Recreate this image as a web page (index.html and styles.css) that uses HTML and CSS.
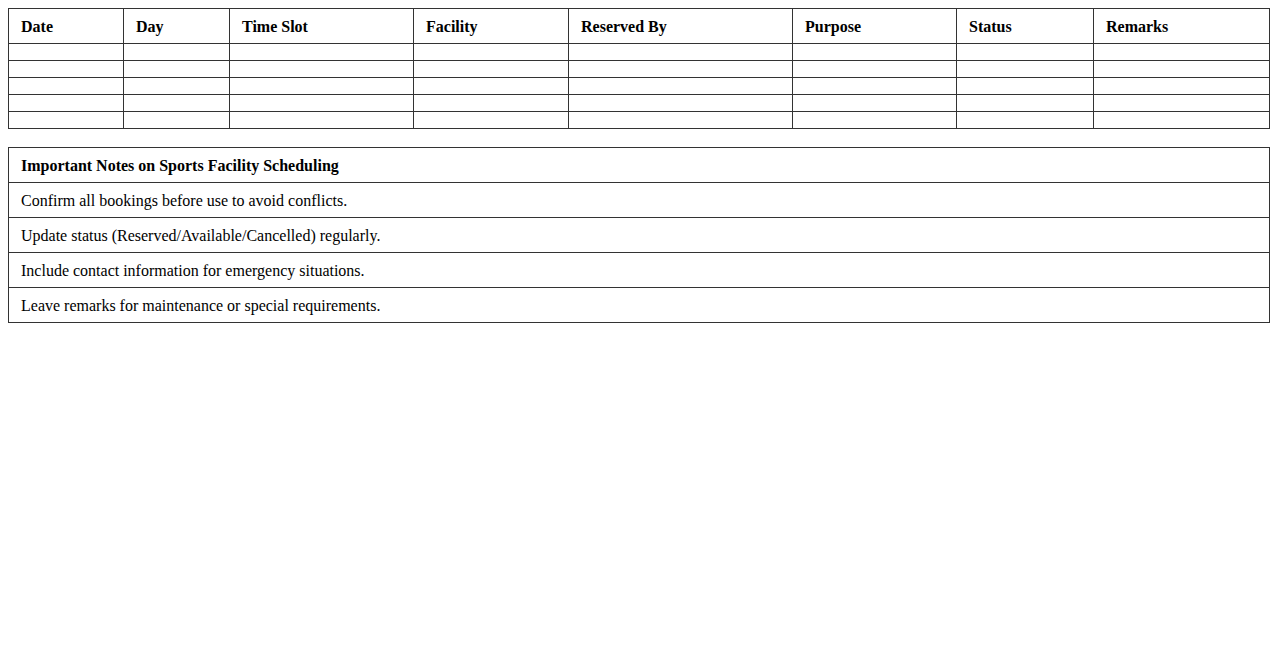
FILE: index.html
```html
<!DOCTYPE html>
<html>
<head>
<meta charset="utf-8">
<title>Sports Facility Schedule</title>
<link rel="stylesheet" href="styles.css">
</head>
<body>
<table class="schedule">
  <colgroup>
    <col class="c1"><col class="c2"><col class="c3"><col class="c4">
    <col class="c5"><col class="c6"><col class="c7"><col class="c8">
  </colgroup>
  <thead>
    <tr>
      <th>Date</th><th>Day</th><th>Time Slot</th><th>Facility</th>
      <th>Reserved By</th><th>Purpose</th><th>Status</th><th>Remarks</th>
    </tr>
  </thead>
  <tbody>
    <tr><td></td><td></td><td></td><td></td><td></td><td></td><td></td><td></td></tr>
    <tr><td></td><td></td><td></td><td></td><td></td><td></td><td></td><td></td></tr>
    <tr><td></td><td></td><td></td><td></td><td></td><td></td><td></td><td></td></tr>
    <tr><td></td><td></td><td></td><td></td><td></td><td></td><td></td><td></td></tr>
    <tr><td></td><td></td><td></td><td></td><td></td><td></td><td></td><td></td></tr>
  </tbody>
</table>

<table class="notes">
  <thead>
    <tr><th>Important Notes on Sports Facility Scheduling</th></tr>
  </thead>
  <tbody>
    <tr><td>Confirm all bookings before use to avoid conflicts.</td></tr>
    <tr><td>Update status (Reserved/Available/Cancelled) regularly.</td></tr>
    <tr><td>Include contact information for emergency situations.</td></tr>
    <tr><td>Leave remarks for maintenance or special requirements.</td></tr>
  </tbody>
</table>
</body>
</html>
```

FILE: styles.css
```css
body {
  margin: 8px;
  font-family: "Liberation Serif", "Times New Roman", serif;
  font-size: 16px;
  color: #000;
  background: #fff;
}

table {
  width: 100%;
  border-collapse: collapse;
}

th, td {
  border: 1px solid #333;
  padding: 9px 12px 7px;
  text-align: left;
  line-height: normal;
}

th {
  font-weight: bold;
}

.schedule {
  table-layout: fixed;
}

.schedule .c1 { width: 115px; }
.schedule .c2 { width: 106px; }
.schedule .c3 { width: 184px; }
.schedule .c4 { width: 155px; }
.schedule .c5 { width: 224px; }
.schedule .c6 { width: 164px; }
.schedule .c7 { width: 137px; }

.notes {
  margin-top: 18px;
}
```
